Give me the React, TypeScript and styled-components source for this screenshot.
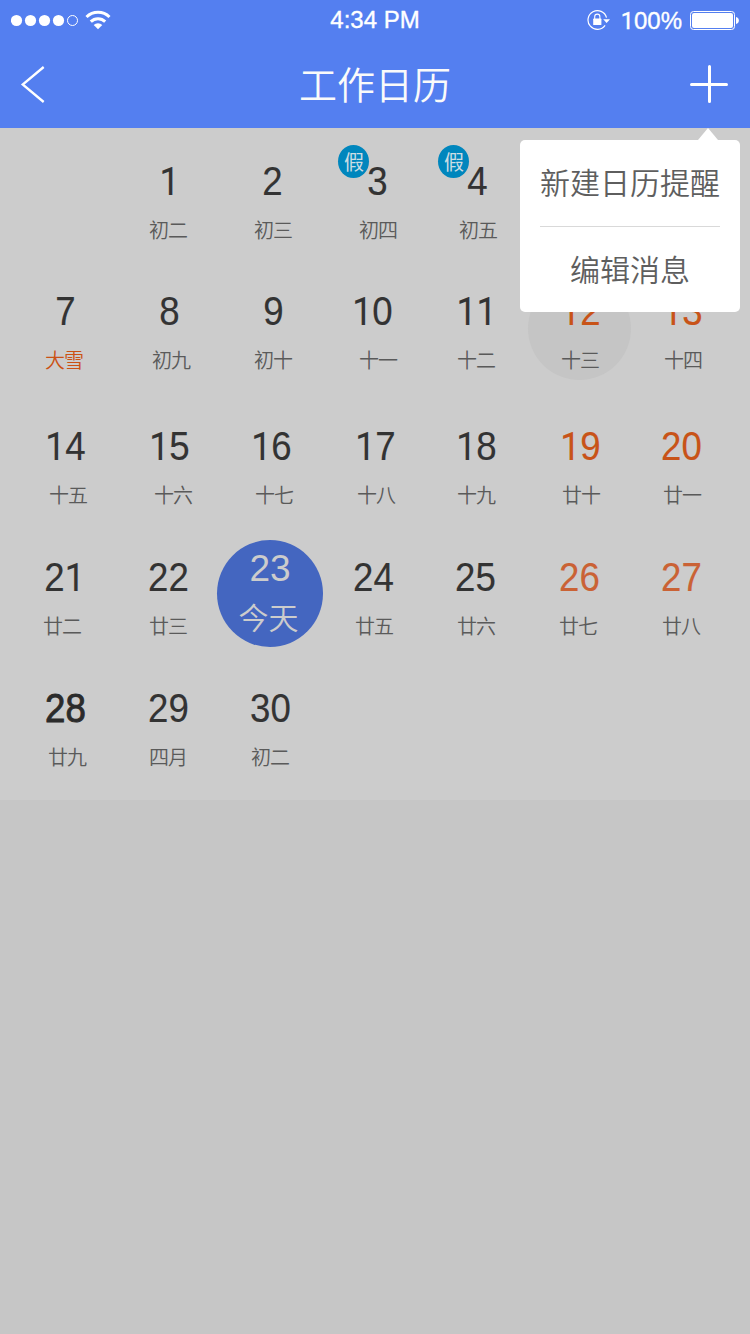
import React from 'react';
import styled, { createGlobalStyle, css } from 'styled-components';

const GlobalStyle = createGlobalStyle`
  * { box-sizing: border-box; }
  body { margin: 0; background: #c6c6c6; }
`;

const cjk = `"Noto Sans CJK SC", "Liberation Sans", sans-serif`;
const latin = `"Liberation Sans", Arial, sans-serif`;

const Screen = styled.main`
  position: relative;
  width: 750px;
  height: 1334px;
  overflow: hidden;
  background: #c6c6c6;
  font-family: ${cjk};
`;

const Header = styled.header`
  height: 128px;
  background: #547ff0;
  color: #fff;
`;

const StatusBar = styled.div`
  display: grid;
  grid-template-columns: 1fr 90px 1fr;
  align-items: center;
  height: 40px;
  padding: 0 11px;
`;

const StatusGroup = styled.div<{ $end?: boolean }>`
  display: flex;
  align-items: center;
  justify-content: ${p => (p.$end ? 'flex-end' : 'flex-start')};
`;

const Clock = styled.time`
  font: 400 24px/40px ${latin};
  -webkit-text-stroke: 0.35px #fff;
  white-space: nowrap;
  text-align: center;
`;

const Percent = styled.span`
  margin: 2px 8px 0 11px;
  font: 400 24px/38px ${latin};
  -webkit-text-stroke: 0.35px #fff;
`;

const PlainOne = styled.span`
  font-family: Roboto, sans-serif;
  font-size: 0.975em;
`;

const NavBar = styled.nav`
  display: flex;
  align-items: center;
  justify-content: space-between;
  height: 88px;
  padding: 0 20px;
`;

const NavButton = styled.button`
  display: flex;
  width: 40px;
  height: 40px;
  padding: 0;
  border: 0;
  background: none;
  color: inherit;
`;

const Title = styled.h1`
  margin: 0 0 2px;
  font: 350 38px/84px ${cjk};
  color: #fafafa;
`;

const Calendar = styled.section`
  display: grid;
  grid-template-columns: repeat(7, 103px);
  grid-template-rows: 130px 135px 131px 131px 145px;
  height: 672px;
  padding-left: 14px;
  background: #cccccc;
`;

const DayCell = styled.div<{ $selected?: boolean }>`
  position: relative;
  display: flex;
  flex-direction: column;
  padding-top: 30px;
  ${p => p.$selected && css`
    &::before {
      content: '';
      position: absolute;
      left: -1px;
      top: 19px;
      width: 103px;
      height: 103px;
      border-radius: 50%;
      background: #c5c5c5;
    }
  `}
`;

const tones = { normal: '#333333', bold: '#2b2b2b', weekend: '#c85318', soft: '#ca6235' };
type Tone = keyof typeof tones;

const DayNumber = styled.span<{ $shift: number; $tone: Tone }>`
  position: relative;
  width: 103px;
  height: 48px;
  margin-left: ${p => p.$shift}px;
  font: 400 40.5px/46px ${latin};
  -webkit-text-stroke: ${p => (p.$tone === 'bold' ? 0.9 : 0.15)}px currentColor;
  text-align: center;
  color: ${p => tones[p.$tone]};
  transform: scaleX(0.905);
`;

const Lunar = styled.span<{ $shift: number; $term?: boolean }>`
  position: relative;
  width: 102px;
  margin-left: ${p => p.$shift}px;
  margin-top: 10px;
  font: 350 20px/28px ${cjk};
  letter-spacing: -1px;
  text-align: center;
  color: ${p => (p.$term ? '#cb5114' : '#5a5a5a')};
`;

const HolidayBadge = styled.span<{ $left: number }>`
  position: absolute;
  left: ${p => p.$left}px;
  top: 17px;
  width: 31px;
  height: 33px;
  padding-left: 1px;
  border-radius: 50%;
  background: #0086bd;
  color: #ccdde4;
  font: 400 20px/33px ${cjk};
  text-align: center;
`;

const Today = styled.div`
  display: flex;
  flex: none;
  flex-direction: column;
  align-items: center;
  width: 106px;
  height: 107px;
  margin: -14px 0 0 -3px;
  border-radius: 50%;
  background: #4466c0;
  color: #cccccc;
`;

const TodayNumber = styled.span`
  margin-top: 8px;
  font: 400 37px/42px ${latin};
`;

const TodayLabel = styled.span`
  margin: 4px 3px 0 0;
  font: 350 30px/44px ${cjk};
`;

const Menu = styled.div`
  position: absolute;
  top: 140px;
  right: 10px;
  width: 220px;
  height: 172px;
  padding: 0 20px;
  border-radius: 5px;
  background: #fff;
  &::before {
    content: '';
    position: absolute;
    right: 22px;
    top: -12px;
    border: solid transparent;
    border-width: 0 10px 12px;
    border-bottom-color: #fff;
  }
`;

const MenuItem = styled.div`
  height: 86px;
  font: 350 30px/83px ${cjk};
  text-align: center;
  white-space: nowrap;
  color: #5e5e5e;
  & + & {
    border-top: 1px solid #d9d9d9;
    line-height: 82px;
  }
`;

interface Day {
  n: number;
  lunar: string;
  dx?: number;
  lx?: number;
  tone?: Tone;
  term?: boolean;
  badge?: number;
  selected?: boolean;
  today?: boolean;
}

const weeks: (Day | null)[][] = [
  [
    null,
    { n: 1, lunar: '初二', dx: 1 },
    { n: 2, lunar: '初三', dx: 1, lx: 2 },
    { n: 3, lunar: '初四', dx: 3, lx: 4, badge: 15 },
    { n: 4, lunar: '初五', dx: 0, lx: 1, badge: 12 },
    null,
    null,
  ],
  [
    { n: 7, lunar: '大雪', lx: -1, term: true },
    { n: 8, lunar: '初九', dx: 1, lx: 3 },
    { n: 9, lunar: '初十', dx: 2, lx: 2 },
    { n: 10, lunar: '十一', dx: -2, lx: 4 },
    { n: 11, lunar: '十二', dx: -1, lx: -1 },
    { n: 12, lunar: '十三', tone: 'weekend', selected: true, dx: 0, lx: 0 },
    { n: 13, lunar: '十四', tone: 'weekend', dx: -1, lx: 0 },
  ],
  [
    { n: 14, lunar: '十五', dx: 0, lx: 3 },
    { n: 15, lunar: '十六', dx: 1, lx: 5 },
    { n: 16, lunar: '十七', dx: 0, lx: 3 },
    { n: 17, lunar: '十八', dx: 1, lx: 2 },
    { n: 18, lunar: '十九', dx: -1, lx: -1 },
    { n: 19, lunar: '廿十', tone: 'weekend', dx: 0, lx: 1 },
    { n: 20, lunar: '廿一', tone: 'weekend', dx: -2, lx: -1 },
  ],
  [
    { n: 21, lunar: '廿二', dx: -1, lx: -3 },
    { n: 22, lunar: '廿三' },
    { n: 23, lunar: '今天', today: true },
    { n: 24, lunar: '廿五', dx: -1 },
    { n: 25, lunar: '廿六', dx: -2, lx: -1 },
    { n: 26, lunar: '廿七', tone: 'soft', dx: -1, lx: -2 },
    { n: 27, lunar: '廿八', tone: 'soft', dx: -2, lx: -2 },
  ],
  [
    { n: 28, lunar: '廿九', tone: 'bold', lx: 2 },
    { n: 29, lunar: '四月' },
    { n: 30, lunar: '初二', dx: -1, lx: -1 },
    null,
    null,
    null,
    null,
  ],
];

const SignalIcon = () => (
  <svg width="100" height="22" viewBox="0 0 100 22" fill="#fff">
    {[5.5, 19.5, 33.5, 47.5].map(x => <circle key={x} cx={x} cy="11.5" r="5.6" />)}
    <circle cx="61.5" cy="11.5" r="5" fill="none" stroke="#fff" strokeWidth="1" />
    <g fill="none" stroke="#fff" strokeWidth="3">
      <path d="M75.5 8a16.5 16.5 0 0 1 23 0" />
      <path d="M79.8 12.6a10.3 10.3 0 0 1 14.4 0" />
    </g>
    <path d="M87 20.2l-4.3-4.3a6.2 6.2 0 0 1 8.6 0z" />
  </svg>
);

const RotationLockIcon = () => (
  <svg width="24" height="22" viewBox="0 0 24 22" fill="none" stroke="#fff">
    <path d="M20.5 8.6A9.4 9.4 0 1 0 19.1 16.4" strokeWidth="1.2" />
    <path d="M17.2 10.2h6.8l-3.4 3.8z" fill="#fff" stroke="none" />
    <rect x="7.2" y="9.6" width="8.2" height="6.4" rx="0.6" fill="#fff" stroke="none" />
    <path d="M8.7 10V7.7a2.6 2.6 0 0 1 5.2 0V10" strokeWidth="1.1" />
  </svg>
);

const BatteryIcon = () => (
  <svg width="49" height="20" viewBox="0 0 49 20">
    <rect x="0.5" y="1.5" width="44" height="18" rx="3" fill="none" stroke="#fff" />
    <rect x="2" y="3" width="41" height="15" rx="2" fill="#fff" />
    <path d="M46 7c3.8.6 3.8 6.4 0 7z" fill="#fff" />
  </svg>
);

const Digits = ({ value }: { value: string | number }) => (
  <>
    {String(value).split('').map((c, i) => (c === '1' ? <PlainOne key={i}>1</PlainOne> : c))}
  </>
);

const DayView = ({ day }: { day: Day }) => {
  if (day.today) {
    return (
      <DayCell>
        <Today>
          <TodayNumber>{day.n}</TodayNumber>
          <TodayLabel>{day.lunar}</TodayLabel>
        </Today>
      </DayCell>
    );
  }
  return (
    <DayCell $selected={day.selected}>
      {day.badge !== undefined && <HolidayBadge $left={day.badge}>假</HolidayBadge>}
      <DayNumber $shift={day.dx ?? 0} $tone={day.tone ?? 'normal'}><Digits value={day.n} /></DayNumber>
      <Lunar $shift={day.lx ?? 0} $term={day.term}>{day.lunar}</Lunar>
    </DayCell>
  );
};

export default function App() {
  return (
    <Screen>
      <GlobalStyle />
      <Header>
        <StatusBar>
          <StatusGroup><SignalIcon /></StatusGroup>
          <Clock>4:34 PM</Clock>
          <StatusGroup $end>
            <RotationLockIcon />
            <Percent><Digits value="100%" /></Percent>
            <BatteryIcon />
          </StatusGroup>
        </StatusBar>
        <NavBar>
          <NavButton aria-label="返回">
            <svg width="40" height="40" viewBox="0 0 40 40" fill="none" stroke="#fff" strokeWidth="2.3">
              <path d="M23.7 3L2.7 20.5 23.7 38" />
            </svg>
          </NavButton>
          <Title>工作日历</Title>
          <NavButton aria-label="新建">
            <svg width="40" height="40" viewBox="0 0 40 40" stroke="#fff" strokeWidth="3" strokeLinecap="round">
              <path d="M19.5 2.5v35M1.5 20.5h35" />
            </svg>
          </NavButton>
        </NavBar>
      </Header>
      <Calendar>
        {weeks.map((week, w) =>
          week.map((day, d) => (day ? <DayView key={`${w}-${d}`} day={day} /> : <DayCell key={`${w}-${d}`} />)),
        )}
      </Calendar>
      <Menu>
        <MenuItem>新建日历提醒</MenuItem>
        <MenuItem>编辑消息</MenuItem>
      </Menu>
    </Screen>
  );
}
